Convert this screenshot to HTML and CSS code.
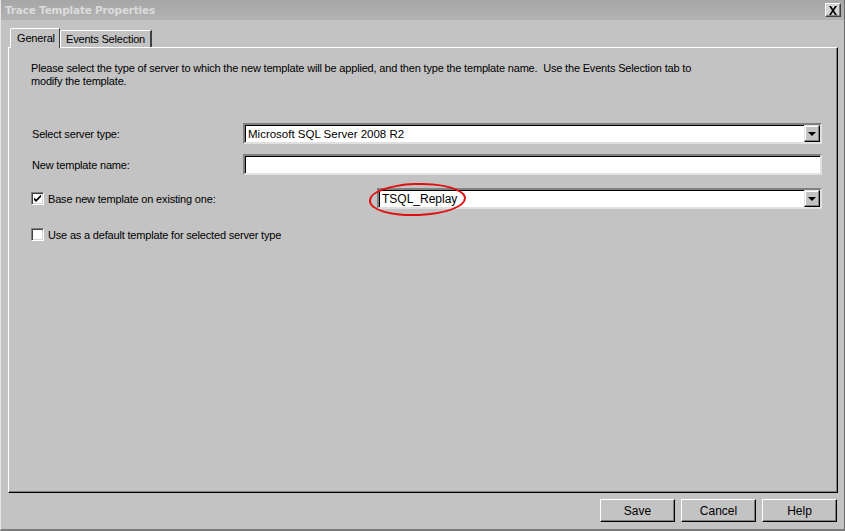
FILE: index.html
```html
<!DOCTYPE html>
<html>
<head>
<meta charset="utf-8">
<link rel="stylesheet" href="styles.css">
</head>
<body>
<div class="window">
  <div class="titlebar">
    <span class="title">Trace Template Properties</span>
    <span class="close"><svg width="10" height="9" viewBox="0 0 10 9"><path d="M1 0h2l2 3 2-3h2L6 4.5 9 9H7L5 6 3 9H1l3-4.5z" fill="#000"/></svg></span>
  </div>
  <div class="body">
    <div class="tabs">
      <div class="tab active">General</div>
      <div class="tab">Events Selection</div>
    </div>
    <div class="panel">
      <p class="intro">Please select the type of server to which the new template will be applied, and then type the template name.&nbsp; Use the Events Selection tab to modify the template.</p>
      <div class="row r1">
        <span class="label">Select server type:</span>
        <div class="combo wide"><span class="value">Microsoft SQL Server 2008 R2</span><span class="drop"><i></i></span></div>
      </div>
      <div class="row r2">
        <span class="label">New template name:</span>
        <div class="textbox wide"></div>
      </div>
      <div class="row r3">
        <span class="check checked"><svg width="9" height="9" viewBox="0 0 9 9"><path d="M1 3.5L3 5.5L8 0.5V3L3 8L1 6Z" fill="#000"/></svg></span>
        <span class="label cl">Base new template on existing one:</span>
        <div class="combo narrow"><span class="value">TSQL_Replay</span><span class="drop"><i></i></span>
          <span class="ring"></span>
        </div>
      </div>
      <div class="row r4">
        <span class="check"></span>
        <span class="label cl">Use as a default template for selected server type</span>
      </div>
    </div>
    <div class="buttons">
      <div class="btn">Save</div>
      <div class="btn">Cancel</div>
      <div class="btn">Help</div>
    </div>
  </div>
</div>
</body>
</html>
```
FILE: styles.css
```css
* { box-sizing: border-box; }
html, body { margin: 0; padding: 0; background: #c3c3c3; }
body { font-family: "Liberation Sans", Arial, sans-serif; font-size: 11px; color: #000; letter-spacing: -0.18px; }
.window {
  width: 845px; height: 531px; background: #c3c3c3;
  border-left: 1px solid #e6e6e6;
  border-right: 1px solid #6a6a6a;
  border-bottom: 2px solid #7a7a7a;
  display: flex; flex-direction: column;
}
.titlebar {
  height: 20px; display: flex; align-items: center; justify-content: space-between;
  background: linear-gradient(#a6a6a6, #b3b3b3);
  padding: 0 3px 0 4px;
}
.title { font-weight: bold; color: #dcdcdc; font-family: "DejaVu Sans", Verdana, sans-serif; font-size: 10.5px; letter-spacing: -0.2px; }
.close {
  width: 16px; height: 14px; background: #d4d4d4;
  border: 1px solid; border-color: #fff #404040 #404040 #fff;
  display: flex; align-items: center; justify-content: center;
  box-shadow: inset -1px -1px 0 #808080;
}
.body { flex: 1; display: flex; flex-direction: column; padding: 7px 6px 0 7px; }
.tabs { display: flex; align-items: flex-end; height: 20px; padding-left: 2px; }
.tab {
  height: 17px; padding: 2px 5px 0 5px; background: #c3c3c3;
  border-top: 1px solid #fff; border-left: 1px solid #fff; border-right: 2px solid #404040;
  border-top-left-radius: 2px; position: relative;
}
.tab.active {
  height: 20px; padding: 3px 5px 0 6px; margin-bottom: -1px;
  border-right: 1px solid #404040; z-index: 1; background: #c3c3c3; width: 50px;
}
.panel {
  height: 446px; border: 1px solid; border-color: #fff #000 #000 #fff;
  box-shadow: inset -1px -1px 0 #808080;
  padding: 14px 15px 0 22px; position: relative;
}
.intro { margin: 0; line-height: 13px; width: 680px; }
.row { display: flex; align-items: center; }
.label { width: 212px; flex: none; padding-left: 1px; }
.r1 { margin-top: 35px; }
.r2 { margin-top: 10px; }
.r3 { margin-top: 13px; }
.r4 { margin-top: 19px; }
.wide { width: 579px; }
.textbox, .combo {
  height: 21px; background: #fff; border: 2px solid;
  border-color: #808080 #e0e0e0 #e0e0e0 #808080;
  box-shadow: inset 1px 1px 0 #000; display: flex; align-items: center; position: relative;
}
.value { flex: 1; padding-left: 3px; padding-top: 1px; font-size: 11.5px; color: #000; letter-spacing: 0; }
.narrow .value { font-size: 12px; }
.drop {
  width: 16px; height: 17px; background: #c3c3c3; flex: none;
  border: 1px solid; border-color: #e0e0e0 #000 #000 #e0e0e0;
  box-shadow: inset -1px -1px 0 #808080, inset 1px 1px 0 #fff;
  display: flex; align-items: center; justify-content: center;
}
.drop i { width: 0; height: 0; border-left: 4px solid transparent; border-right: 4px solid transparent; border-top: 4px solid #000; margin-top: 1px; }
.check {
  width: 13px; height: 13px; flex: none; background: #fff; border: 1px solid;
  border-color: #808080 #fff #fff #808080;
  box-shadow: inset 1px 1px 0 #404040, inset -1px -1px 0 #d4d4d4;
  display: flex; align-items: center; justify-content: center;
}
.cl { width: auto; padding-left: 4px; }
.r3 .cl { width: 333px; flex: none; }
.narrow { width: 446px; }
.ring {
  position: absolute; left: -10px; top: -7px; width: 97px; height: 33px;
  border: 2px solid #e01010; border-radius: 48% 52% 50% 50%; transform: rotate(-2deg);
}
.buttons { display: flex; justify-content: flex-end; gap: 6px; padding-top: 6px; padding-right: 1px; }
.btn {
  width: 75px; height: 23px; background: #c3c3c3; display: flex; align-items: center; justify-content: center;
  border: 1px solid; border-color: #fff #000 #000 #fff;
  box-shadow: inset -1px -1px 0 #808080; font-size: 12px; letter-spacing: 0;
}
```
